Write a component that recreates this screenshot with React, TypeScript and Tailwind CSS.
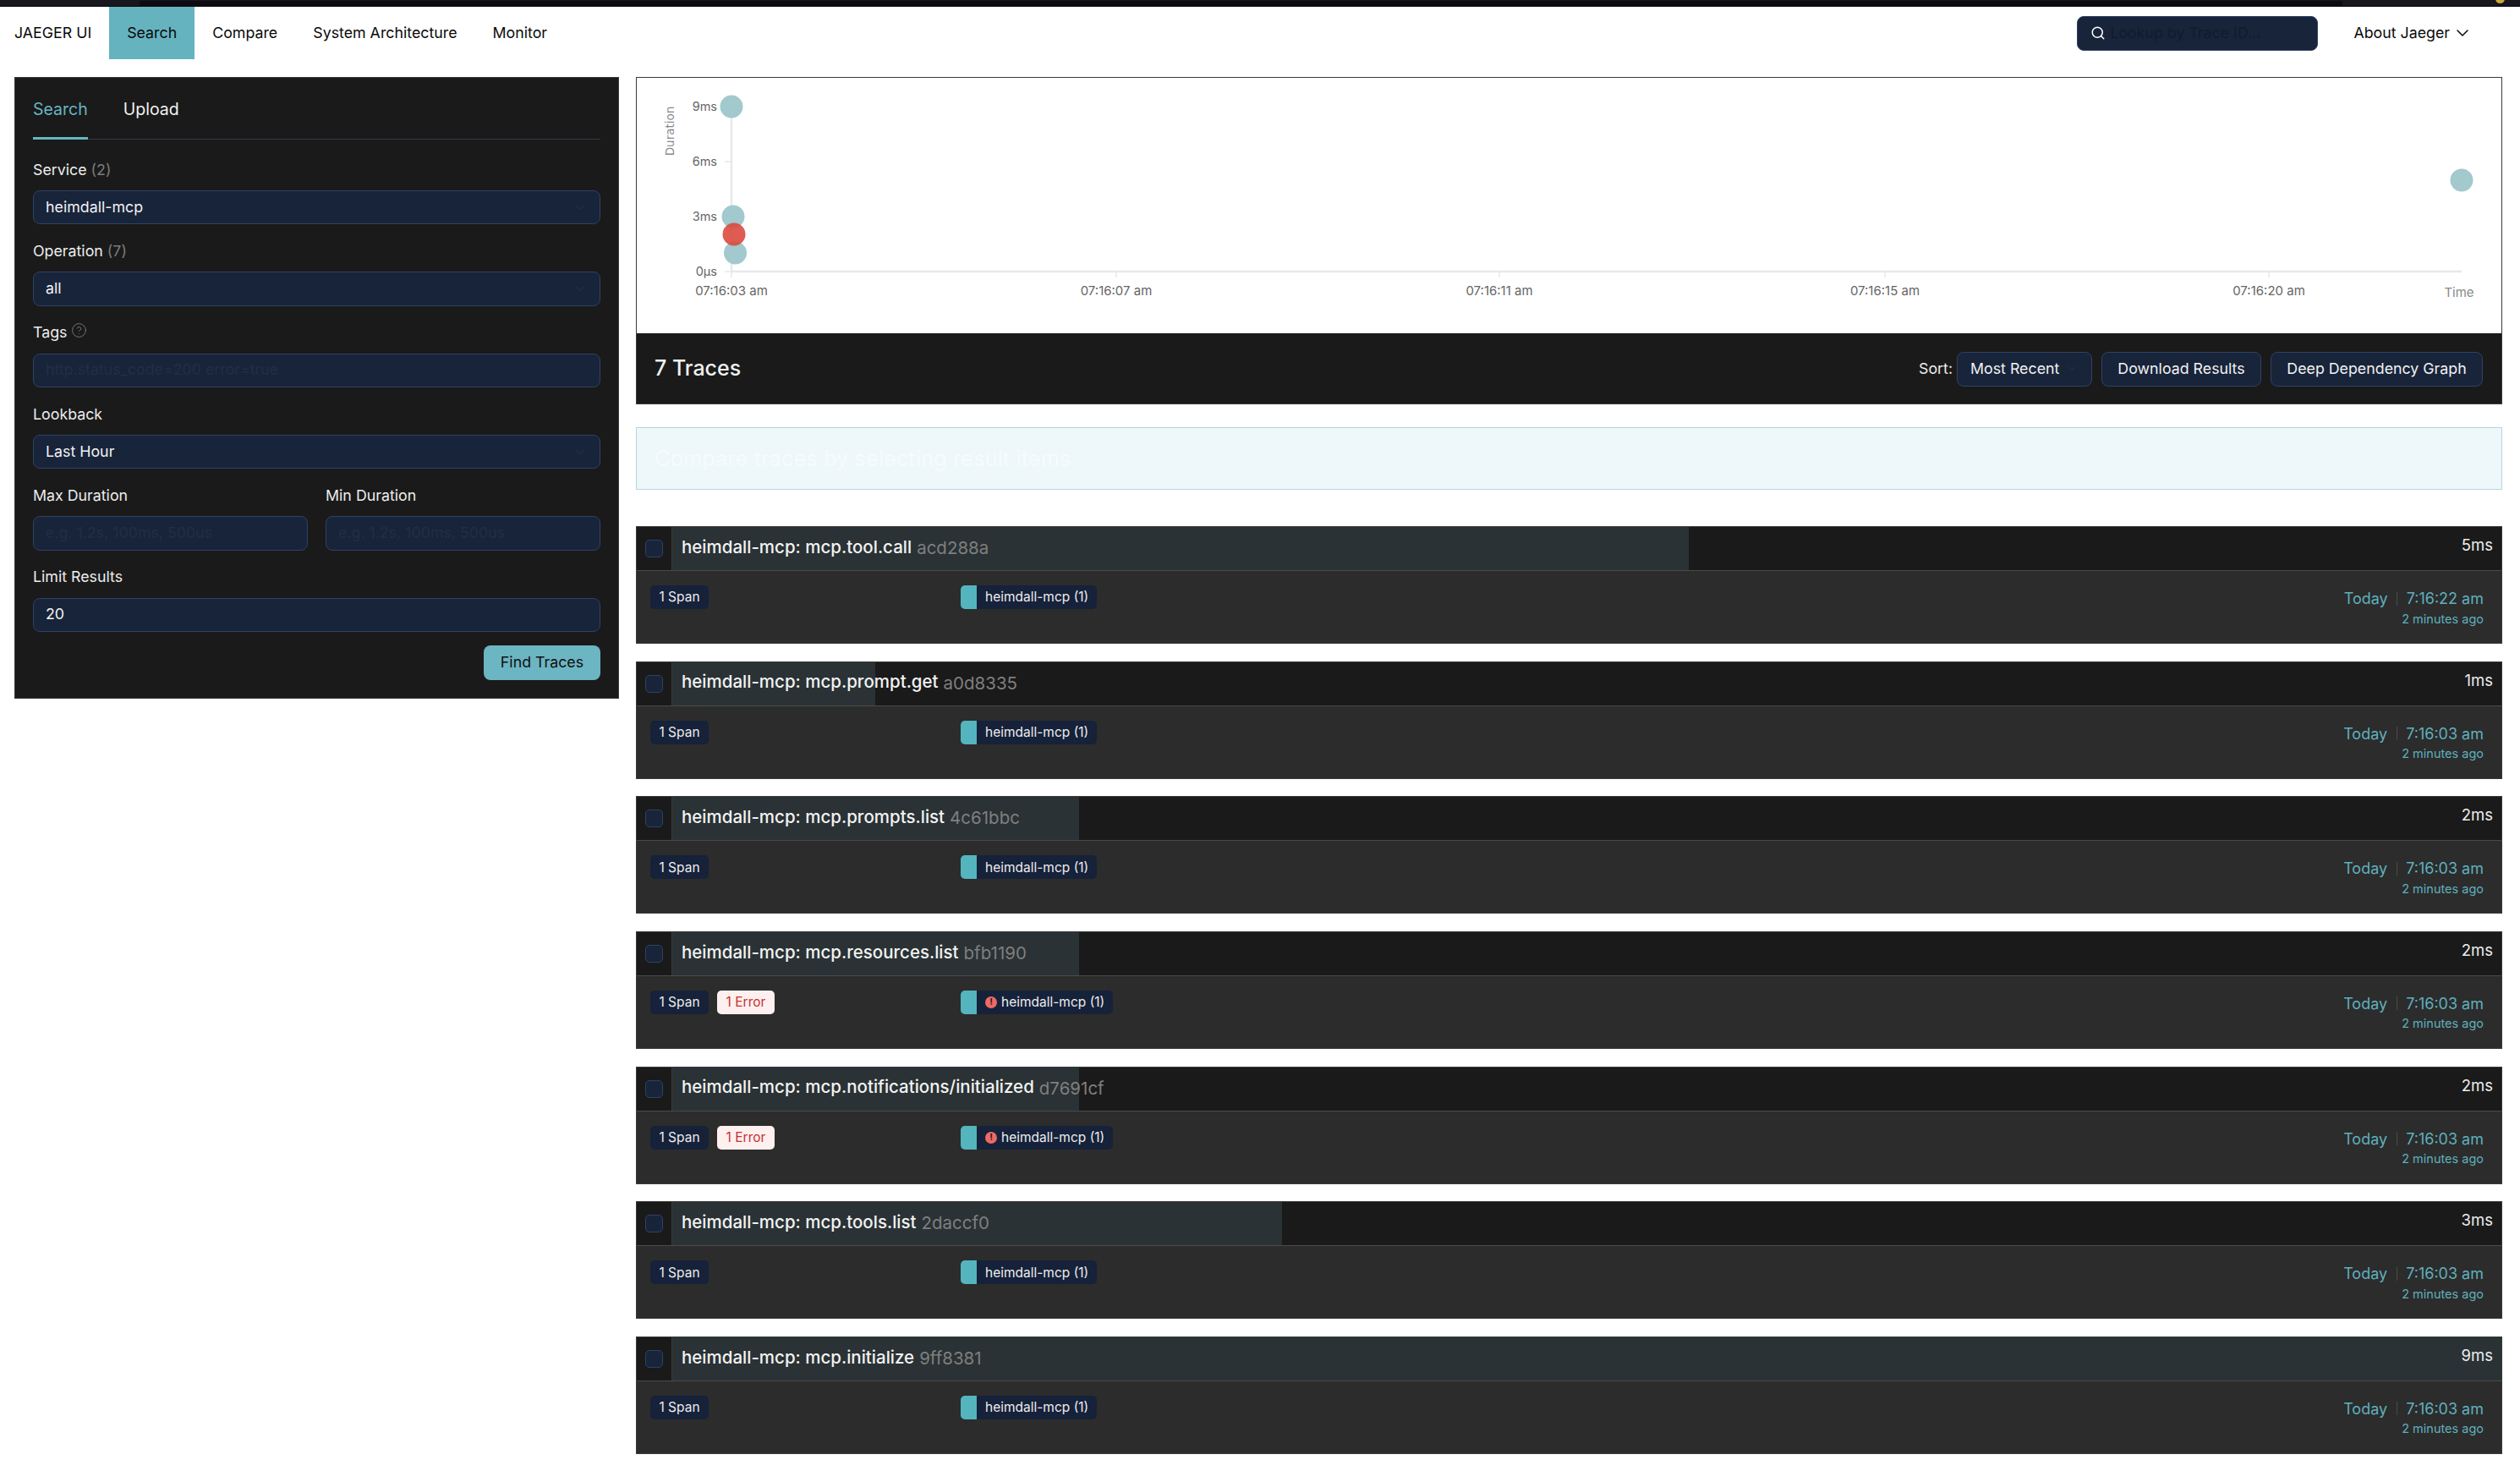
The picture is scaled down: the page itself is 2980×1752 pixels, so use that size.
import { ChevronDown, Search, CircleHelp } from "lucide-react";

const font = { fontFamily: "Inter, 'Liberation Sans', sans-serif" };

function Select({ value, className = "" }: { value: string; className?: string }) {
  return (
    <div className={`flex h-[40.33px] items-center justify-between rounded-[8px] border border-[#2f4263] bg-[#18243a] pl-[14px] pr-[15px] text-[#f2f2f2] ${className}`}>
      <span>{value}</span>
      <ChevronDown size={17} strokeWidth={1.2} className="text-[#2a3a58]" />
    </div>
  );
}

function TextInput({ value, placeholder }: { value?: string; placeholder?: string }) {
  return (
    <div className="flex h-[40.33px] items-center rounded-[8px] border border-[#2f4263] bg-[#18243a] px-[14px]">
      {value ? <span className="text-[#f2f2f2]">{value}</span> : <span className="text-[#222e44]">{placeholder}</span>}
    </div>
  );
}

function Label({ children }: { children: React.ReactNode }) {
  return <div className="mb-[12px] flex h-[24px] items-center gap-[5px] text-[#ededed]">{children}</div>;
}

function SidePanel() {
  return (
    <aside className="h-[735px] w-[715px] shrink-0 border border-[#3a3a3a] bg-[#1a1a1a] px-[21px] text-[17.8px]">
      <div className="flex h-[73px] gap-[42px] border-b border-[#30384a] text-[19.5px]">
        <div className="relative pt-[23px] text-[#66b6c2]">
          Search
          <div className="absolute bottom-[-1px] left-0 right-0 h-[3px] bg-[#66b6c2]" />
        </div>
        <div className="pt-[23px] text-[#f2f2f2]">Upload</div>
      </div>
      <div className="pt-[24px]">
        <div className="mb-[20px]">
          <Label>
            <span>Service <span className="text-[#7c7c7c]">(2)</span></span>
          </Label>
          <Select value="heimdall-mcp" />
        </div>
        <div className="mb-[20px]">
          <Label>
            <span>Operation <span className="text-[#7c7c7c]">(7)</span></span>
          </Label>
          <Select value="all" />
        </div>
        <div className="mb-[20px]">
          <Label>
            <span>Tags</span>
            <CircleHelp size={19} strokeWidth={1} className="-mt-[6px] text-[#8a8a8a]" />
          </Label>
          <TextInput placeholder="http.status_code=200 error=true" />
        </div>
        <div className="mb-[20px]">
          <Label>Lookback</Label>
          <Select value="Last Hour" />
        </div>
        <div className="mb-[20px] grid grid-cols-2 gap-[21px]">
          <div>
            <Label>Max Duration</Label>
            <TextInput placeholder="e.g. 1.2s, 100ms, 500us" />
          </div>
          <div>
            <Label>Min Duration</Label>
            <TextInput placeholder="e.g. 1.2s, 100ms, 500us" />
          </div>
        </div>
        <div className="mb-[16px]">
          <Label>Limit Results</Label>
          <TextInput value="20" />
        </div>
        <div className="flex justify-end">
          <button className="h-[41px] w-[138px] rounded-[8px] bg-[#6cb5c2] text-[17.8px] text-[#101010]">Find Traces</button>
        </div>
      </div>
    </aside>
  );
}

const dots = [
  { cx: 112, cy: 34, c: "#a2c9cd" },
  { cx: 114, cy: 164, c: "#a2c9cd" },
  { cx: 116.5, cy: 207, c: "#a2c9cd" },
  { cx: 115, cy: 185, c: "#d9453a" },
  { cx: 2158, cy: 121, c: "#a2c9cd" },
];
const xTicks = [
  { x: 112, t: "07:16:03 am" },
  { x: 567, t: "07:16:07 am" },
  { x: 1020, t: "07:16:11 am" },
  { x: 1476, t: "07:16:15 am" },
  { x: 1930, t: "07:16:20 am" },
];
const yTicks = [
  { y: 34, t: "9ms" },
  { y: 99, t: "6ms" },
  { y: 164, t: "3ms" },
  { y: 229, t: "0µs" },
];

function Chart() {
  return (
    <div className="h-[303px] border-x border-t border-[#3a3a3a] bg-white">
      <svg width="2205" height="302" className="block" style={font}>
        <line x1="112" y1="34" x2="112" y2="229" stroke="#e6e8ea" strokeWidth="2.5" />
        <line x1="112" y1="229" x2="2158" y2="229" stroke="#e6e8ea" strokeWidth="2.5" />
        {yTicks.map((k) => (
          <g key={k.t}>
            <line x1="104" y1={k.y} x2="112" y2={k.y} stroke="#e6e8ea" strokeWidth="1.5" />
            <text x="95" y={k.y + 5} textAnchor="end" fontSize="14.5" fill="#666">{k.t}</text>
          </g>
        ))}
        {xTicks.map((k) => (
          <g key={k.t}>
            <line x1={k.x} y1="229" x2={k.x} y2="236" stroke="#e6e8ea" strokeWidth="1.5" />
            <text x={k.x} y="257" textAnchor="middle" fontSize="15" fill="#666">{k.t}</text>
          </g>
        ))}
        <text x="2155" y="259" textAnchor="middle" fontSize="15" fill="#888">Time</text>
        <text transform="translate(44 63) rotate(-90)" textAnchor="middle" fontSize="13.5" fill="#888" style={{ fontFamily: "'DejaVu Sans', sans-serif" }}>Duration</text>
        {dots.map((d, i) => (
          <circle key={i} cx={d.cx} cy={d.cy} r="13.5" fill={d.c} fillOpacity={d.c === "#d9453a" ? 0.88 : 1} />
        ))}
      </svg>
    </div>
  );
}

function DarkButton({ children, className }: { children: React.ReactNode; className: string }) {
  return <div className={`flex h-[41px] items-center justify-center rounded-[8px] border border-[#2f4263] bg-[#18243a] text-[#f2f2f2] ${className}`}>{children}</div>;
}

function ResultsBar() {
  return (
    <div className="flex h-[84px] items-center justify-between border border-t-0 border-[#3a3a3a] bg-[#1a1a1a] pl-[21px] pr-[22px] pt-[1px]">
      <div className="text-[25px] font-medium text-[#f0f0f0]">7 Traces</div>
      <div className="flex items-center gap-[11px] text-[17.8px]">
        <div className="flex items-center gap-[5px]">
          <span className="text-[#ededed]">Sort:</span>
          <div className="flex h-[41px] w-[160px] items-center justify-between rounded-[8px] border border-[#2f4263] bg-[#18243a] pl-[15px] pr-[15px] text-[#f2f2f2]">
            <span>Most Recent</span>
            <ChevronDown size={16} strokeWidth={1.2} className="text-[#2a3a58]" />
          </div>
        </div>
        <DarkButton className="w-[189px]">Download Results</DarkButton>
        <DarkButton className="w-[251px]">Deep Dependency Graph</DarkButton>
      </div>
    </div>
  );
}

const traces = [
  { op: "mcp.tool.call", id: "acd288a", ms: 5, time: "7:16:22 am", err: false },
  { op: "mcp.prompt.get", id: "a0d8335", ms: 1, time: "7:16:03 am", err: false },
  { op: "mcp.prompts.list", id: "4c61bbc", ms: 2, time: "7:16:03 am", err: false },
  { op: "mcp.resources.list", id: "bfb1190", ms: 2, time: "7:16:03 am", err: true },
  { op: "mcp.notifications/initialized", id: "d7691cf", ms: 2, time: "7:16:03 am", err: true },
  { op: "mcp.tools.list", id: "2daccf0", ms: 3, time: "7:16:03 am", err: false },
  { op: "mcp.initialize", id: "9ff8381", ms: 9, time: "7:16:03 am", err: false },
];

function TraceRow({ t }: { t: (typeof traces)[number] }) {
  return (
    <div className="mb-[20.67px] h-[139px] bg-[#2c2c2c]">
      <div className="flex h-[53px] border border-[#3a3a3a] border-b-[#4a4a4a] bg-[#1a1a1a]">
        <div className="flex w-[42px] shrink-0 items-center justify-center border-r border-[#3a3a3a]">
          <div className="h-[21px] w-[21px] rounded-[5px] border border-[#2f4263] bg-[#18243a]" />
        </div>
        <div className="relative flex-1">
          <div className="absolute inset-y-0 left-0 bg-[#2a3235]" style={{ width: `${(t.ms / 9) * 100}%` }} />
          <div className="relative flex h-full items-center justify-between pl-[11px] pr-[10px]">
            <div className="flex items-center whitespace-nowrap">
              <span className="pb-[3px] text-[20.5px] font-medium text-[#f2f2f2]">heimdall-mcp: {t.op}</span>
              <span className="ml-[6px] text-[20.5px] text-[#7f7f7f]">{t.id}</span>
            </div>
            <span className="mb-[7px] text-[18.5px] text-[#ececec]">{t.ms}ms</span>
          </div>
        </div>
      </div>
      <div className="flex h-[86px] border border-t-0 border-[#3a3a3a]">
        <div className="flex w-[383px] shrink-0 items-start gap-[10px] pl-[16px] pt-[17px]">
          <div className="flex h-[28px] w-[69px] items-center justify-center rounded-[5px] bg-[#16213a] text-[15.5px] text-[#ececec]">1 Span</div>
          {t.err && (
            <div className="flex h-[28px] w-[68px] items-center justify-center rounded-[5px] bg-[#fff0f0] text-[15.5px] text-[#c53030]">1 Error</div>
          )}
        </div>
        <div className="flex-1 pt-[17px]">
          <div className="inline-flex h-[28px] items-stretch overflow-hidden rounded-[5px] bg-[#16213a] pr-[10px] text-[15.5px] text-[#ececec]">
            <div className="mr-[10px] w-[19px] bg-[#54b5be]" />
            <div className="flex items-center">
              {t.err && (
                <span className="mr-[5px] flex h-[14px] w-[14px] items-center justify-center rounded-full bg-[#ee6a63] text-[11px] font-bold leading-none text-[#16213a]">!</span>
              )}
              heimdall-mcp (1)
            </div>
          </div>
        </div>
        <div className="flex flex-col items-end pr-[21px] pt-[20.5px] text-[#5fb0bd]">
          <div className="flex h-[24px] items-center text-[18px]">
            <span>Today</span>
            <span className="mx-[10.5px] h-[16px] w-px bg-[#4a4a4a]" />
            <span>{t.time}</span>
          </div>
          <div className="mt-[1px] text-[14.5px]">2 minutes ago</div>
        </div>
      </div>
    </div>
  );
}

export default function App() {
  return (
    <div className="min-h-[1752px] w-[2980px] bg-white text-[18px]" style={font}>
      <div className="relative h-[8px] overflow-hidden bg-[#17171d]">
        <div className="absolute bottom-0 left-0 right-0 h-px bg-[#08080c]" />
        <div className="absolute bottom-0 left-[165px] right-[210px] top-[1px] bg-[#0b0b10]" />
        <div className="absolute -top-[7px] right-[18px] h-[11px] w-[11px] rounded-full bg-[#c9a83a]" />
      </div>
      <nav className="flex h-[62px] items-stretch justify-between text-[17.8px] text-[#0a0a0a]">
        <div className="flex items-stretch pl-[17px]">
          <div className="mr-[21px] flex items-center">JAEGER UI</div>
          <div className="flex items-center bg-[#66b3c0] px-[21px]">Search</div>
          <div className="flex items-center px-[21px]">Compare</div>
          <div className="flex items-center px-[21px]">System Architecture</div>
          <div className="flex items-center px-[21px]">Monitor</div>
        </div>
        <div className="flex items-center pr-[56px]">
          <div className="mr-[42px] flex h-[41px] w-[285px] items-center rounded-[8px] border border-[#2f4263] bg-[#18243a] pl-[15px]">
            <Search size={18} strokeWidth={2} className="mr-[5px] text-white" />
            <span className="text-[#111b2e]">Lookup by Trace ID...</span>
          </div>
          <span>About Jaeger</span>
          <ChevronDown size={24} strokeWidth={1.5} className="ml-[3px]" />
        </div>
      </nav>
      <main className="flex gap-[20px] pl-[17px] pr-[21px] pt-[21px]">
        <SidePanel />
        <section className="flex-1">
          <Chart />
          <ResultsBar />
          <div className="mb-[43px] mt-[27px] flex h-[74px] items-center border border-[#b5d8de] bg-[#eef7fa] px-[21px] text-[25.5px] text-[#f6fbfc]">
            Compare traces by selecting result items
          </div>
          {traces.map((t) => (
            <TraceRow key={t.id} t={t} />
          ))}
        </section>
      </main>
    </div>
  );
}
